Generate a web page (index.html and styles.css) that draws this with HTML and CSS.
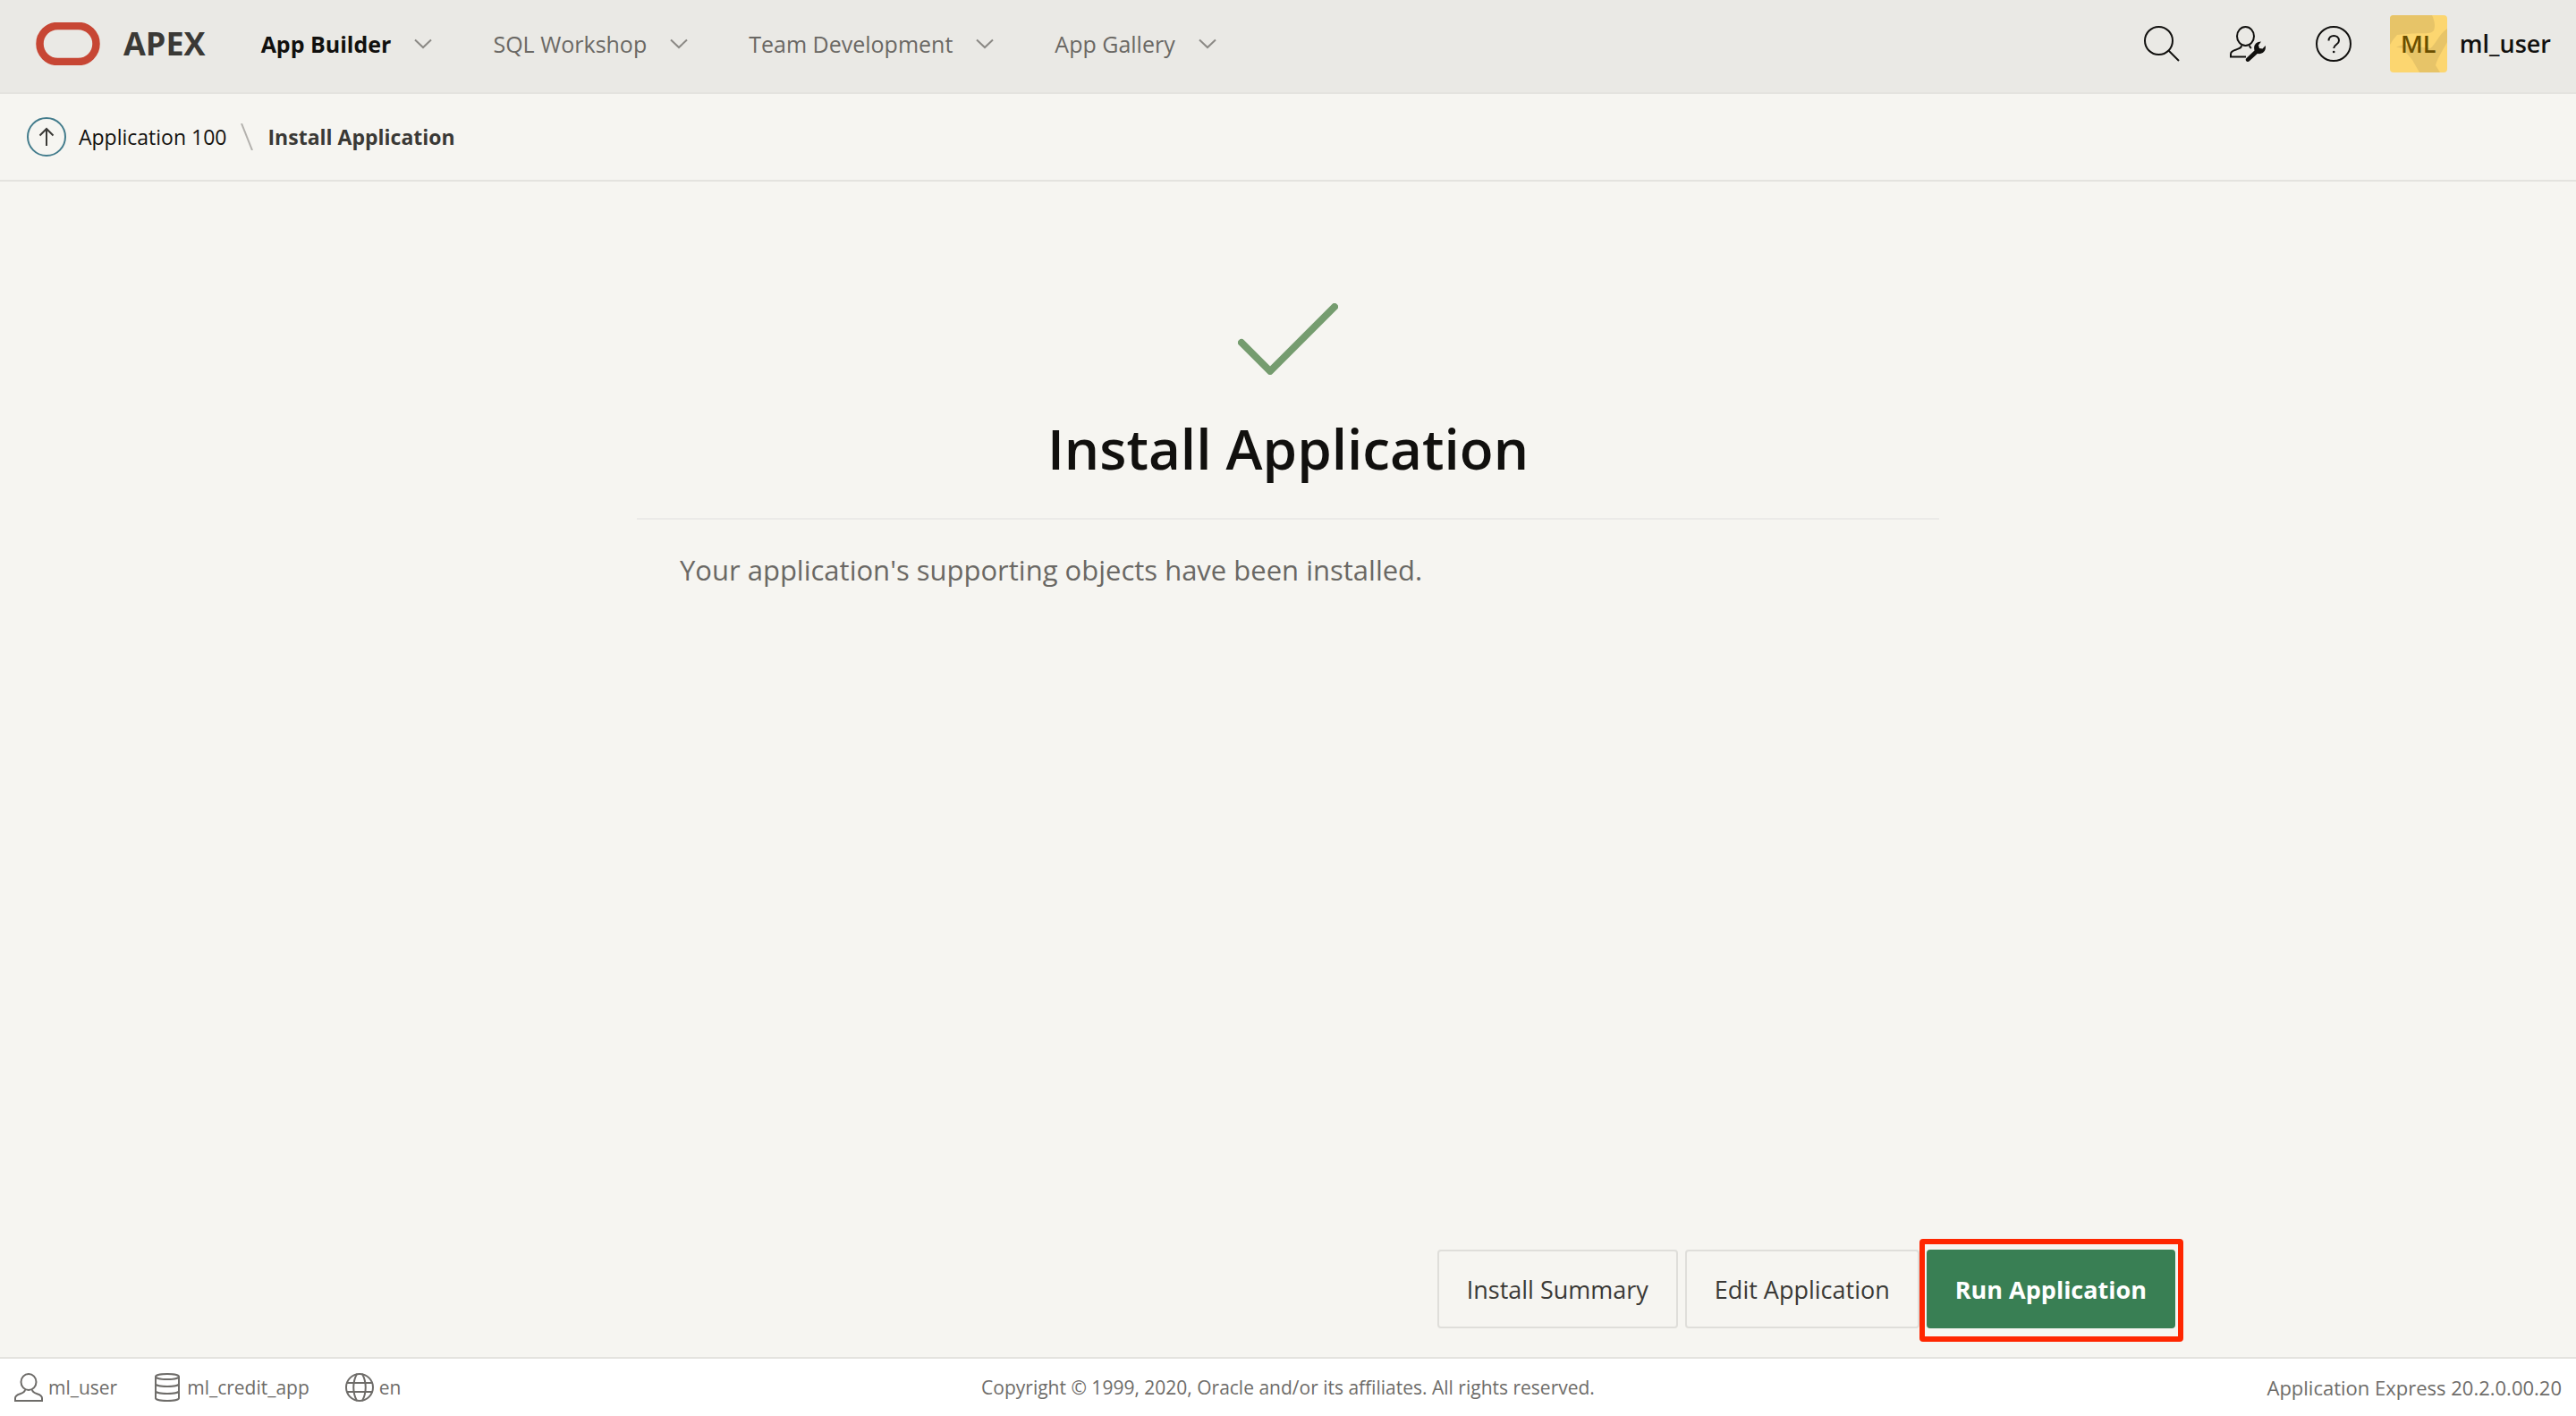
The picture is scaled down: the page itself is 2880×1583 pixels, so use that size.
FILE: index.html
```html
<!DOCTYPE html>
<html lang="en">
<head>
<meta charset="utf-8">
<title>Install Application</title>
<link rel="stylesheet" href="styles.css">
</head>
<body>
<header class="header">
  <a class="brand" href="#">
    <svg class="brand-mark" viewBox="0 0 72 48" aria-hidden="true"><rect x="4.500" y="4" width="63" height="40" rx="20" fill="none" stroke="#c74634" stroke-width="8.500"/></svg>
    <span>APEX</span>
  </a>
  <nav class="nav">
    <button class="nav-item nav-current" type="button">App Builder <svg class="chevron" viewBox="0 0 20 12" aria-hidden="true"><path d="M1 1.500l9 8.500 9-8.500"/></svg></button>
    <button class="nav-item" type="button">SQL Workshop <svg class="chevron" viewBox="0 0 20 12" aria-hidden="true"><path d="M1 1.500l9 8.500 9-8.500"/></svg></button>
    <button class="nav-item" type="button">Team Development <svg class="chevron" viewBox="0 0 20 12" aria-hidden="true"><path d="M1 1.500l9 8.500 9-8.500"/></svg></button>
    <button class="nav-item" type="button">App Gallery <svg class="chevron" viewBox="0 0 20 12" aria-hidden="true"><path d="M1 1.500l9 8.500 9-8.500"/></svg></button>
  </nav>
  <div class="tools">
    <button class="tool" type="button" aria-label="Search"><svg viewBox="0 0 40 40"><circle cx="16.500" cy="16.500" r="15.500"/><path d="M27.500 27.500L39 39"/></svg></button>
    <button class="tool" type="button" aria-label="Administration"><svg viewBox="0 0 40 40"><ellipse cx="17.500" cy="11.500" rx="9.500" ry="10.500"/><path d="M13 21.500c0 3-2 3.500-6 5-4 1.200-6 2.500-6 5V34.500h17M22 21.500c0 1.500.5 2.500 2 3.500"/><path class="solid" d="M18.300 36.300l9.200-8.800c-1.500-5.500 1.500-10 7.500-10l-3 4 1 3.500 3.500.5 3.300-3.500c1 6-3 10-9 9l-9.300 8.500c-2.300 1.700-5-.9-3.200-3.200z"/></svg></button>
    <button class="tool" type="button" aria-label="Help"><svg viewBox="0 0 40 40"><circle cx="20" cy="20" r="19"/><path d="M14.500 16.500c0-7.500 11.500-7.500 11.500 0 0 4.500-5.800 4-5.800 8.500"/><circle class="solid" cx="20.200" cy="29" r="1.300"/></svg></button>
    <button class="account" type="button">
      <span class="avatar"><svg class="avatar-art" viewBox="0 0 64 64" aria-hidden="true"><path d="M0 0h47c3 6 4 13 2 17-3 4-8 3-24 3.500L8 22Q4 26 0 33zM64 15v15c-4 8-10 16-13 26l5 8H33l-8-14-11-13-7-1.500 8-2.500 30 4c6-4 9-15 19-22z"/></svg><span>ML</span></span>
      <span>ml_user</span>
    </button>
  </div>
</header>
<nav class="crumbs" aria-label="Breadcrumb">
  <a class="up" href="#" aria-label="Up"><svg viewBox="0 0 44 44"><circle cx="22" cy="22" r="21"/><path d="M22 32V13M14.500 20.500L22 13l7.500 7.500"/></svg></a>
  <a class="crumb" href="#">Application 100</a>
  <svg class="slash" viewBox="0 0 14 30" aria-hidden="true"><path d="M1 0l12 30"/></svg>
  <span class="crumb-current">Install Application</span>
</nav>
<main class="main">
  <section class="wizard">
    <div class="title">
      <svg class="check" viewBox="0 0 112 80" aria-hidden="true"><path d="M4 44l32 32L108 4"/></svg>
      <h1>Install Application</h1>
    </div>
    <p class="message">Your application's supporting objects have been installed.</p>
  </section>
  <div class="actions">
    <button class="button" type="button">Install Summary</button>
    <button class="button" type="button">Edit Application</button>
    <span class="callout"><button class="button button-hot" type="button">Run Application</button></span>
  </div>
</main>
<footer class="footer">
  <div class="session">
    <span class="meta"><svg viewBox="0 0 32 32" aria-hidden="true"><ellipse cx="16" cy="10" rx="8.500" ry="9"/><path d="M12 18.500c0 6-11 3.500-11 9.500v3h30v-3c0-6-11-3.500-11-9.500"/></svg>ml_user</span>
    <span class="meta"><svg viewBox="0 0 32 32" aria-hidden="true"><ellipse cx="16" cy="4" rx="13" ry="3"/><path d="M3 4v24c0 4 26 4 26 0V4M3 12c0 4 26 4 26 0M3 20c0 4 26 4 26 0"/></svg>ml_credit_app</span>
    <span class="meta"><svg viewBox="0 0 32 32" aria-hidden="true"><circle cx="16" cy="16" r="15"/><path d="M2 11h28M2 21h28M13 1c-5 9-5 21 0 30M19 1c5 9 5 21 0 30"/></svg>en</span>
  </div>
  <span>Copyright © 1999, 2020, Oracle and/or its affiliates. All rights reserved.</span>
  <span class="version">Application Express 20.2.0.00.20</span>
</footer>
</body>
</html>
```
FILE: styles.css
```css
* { box-sizing: border-box; }

body {
  margin: 0;
  min-height: 100vh;
  display: flex;
  flex-direction: column;
  background: #f6f5f1;
  color: #11100e;
  font-family: "Open Sans", "Noto Sans", sans-serif;
  font-size: 25px;
}

a { color: inherit; text-decoration: none; }

button {
  margin: 0;
  padding: 0;
  border: 0;
  background: none;
  color: inherit;
  font: inherit;
  cursor: pointer;
}

svg {
  display: block;
  flex: none;
  fill: none;
  stroke: currentColor;
}

.header {
  display: flex;
  align-items: center;
  padding: 0 28px 6px 40px;
  height: 105px;
  background: #eae9e5;
  border-bottom: 2px solid #e4e3df;
}

.brand {
  display: flex;
  align-items: center;
  gap: 26px;
  color: #3a3936;
  font-size: 36px;
  font-weight: 700;
  line-height: 48px;
}

.brand-mark { width: 72px; height: 48px; }

.nav {
  display: flex;
  gap: 68px;
  margin-left: 62px;
}

.nav-item {
  display: flex;
  align-items: center;
  gap: 26px;
  color: #6a6864;
}

.nav-current { color: #11100e; font-weight: 700; }

.chevron {
  width: 20px;
  height: 12px;
  color: #8b8985;
  stroke-width: 2;
}

.tools {
  display: flex;
  align-items: center;
  gap: 56px;
  margin-left: auto;
}

.tool svg { width: 40px; height: 40px; stroke-width: 2; }

.tool .solid { fill: currentColor; stroke: none; }

.account {
  display: flex;
  align-items: center;
  gap: 14px;
  margin-left: -13px;
  font-size: 27px;
  font-weight: 600;
}

.avatar {
  display: grid;
  place-items: center;
  width: 64px;
  height: 64px;
  overflow: hidden;
  border-radius: 4px;
  background: #fcd670;
  color: #6a4e00;
}

.avatar > * { grid-area: 1 / 1; }

.avatar-art { width: 64px; height: 64px; fill: #e7c468; stroke: none; }

.crumbs {
  display: flex;
  align-items: center;
  height: 98px;
  padding: 0 30px;
  border-bottom: 2px solid #e4e3df;
  font-size: 23px;
}

.up svg { width: 44px; height: 44px; stroke-width: 2; color: #3a3936; }
.up circle { stroke: #437c8c; }

.crumb { margin-left: 14px; }

.slash {
  width: 14px;
  height: 30px;
  margin: 0 16px;
  color: #b3b1ad;
  stroke-width: 2;
}

.crumb-current { color: #3a3936; font-weight: 700; }

.main {
  flex: 1;
  display: flex;
  flex-direction: column;
  justify-content: space-between;
  width: 100%;
  max-width: 1456px;
  margin: 0 auto;
}

.title {
  display: flex;
  flex-direction: column;
  align-items: center;
  gap: 38px;
  padding: 136px 0 34px;
  border-bottom: 2px solid #ebeae8;
}

.check {
  width: 112px;
  height: 80px;
  color: #759c6f;
  stroke-width: 8;
  stroke-linecap: round;
  stroke-linejoin: round;
}

h1 {
  margin: 0;
  font-size: 62px;
  line-height: 88px;
  font-weight: 600;
}

.message {
  margin: 0;
  padding: 32px 48px;
  color: #6a6864;
  font-size: 31px;
  line-height: 48px;
}

.actions {
  display: flex;
  align-self: flex-end;
  gap: 8px;
  margin: 0 -264px 32px 0;
}

.button {
  height: 88px;
  padding: 0 31px;
  border: 2px solid #dfdeda;
  border-radius: 4px;
  color: #3a3936;
  font-size: 27px;
}

.button-hot {
  padding: 0 30px;
  border-color: #397f54;
  background: #397f54;
  color: #fff;
  font-weight: 700;
}

.callout { position: relative; }

.callout::after {
  content: "";
  position: absolute;
  inset: -12px -9px -15px -8px;
  border: 6px solid #ff2600;
  border-radius: 4px;
  pointer-events: none;
}

.footer {
  display: grid;
  grid-template-columns: 1fr auto 1fr;
  align-items: center;
  height: 66px;
  padding: 0 16px;
  border-top: 2px solid #e4e3df;
  background: #fff;
  color: #6e6c69;
  font-size: 21px;
}

.session { display: flex; gap: 40px; }

.meta { display: flex; align-items: center; gap: 6px; }

.meta svg { width: 32px; height: 32px; stroke-width: 2; }

.version { font-size: 22px; text-align: right; }
```
